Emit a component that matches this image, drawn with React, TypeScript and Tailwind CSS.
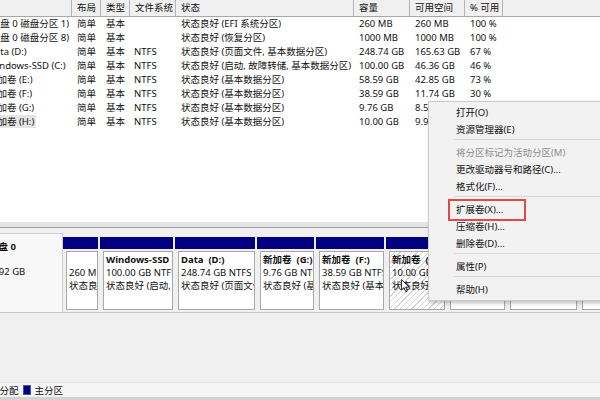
import React from 'react'

const rows = [
  { name: '(磁盘 0 磁盘分区 1)', fs: '', status: '状态良好 (EFI 系统分区)', cap: '260 MB', free: '260 MB', pct: '100 %' },
  { name: '(磁盘 0 磁盘分区 8)', fs: '', status: '状态良好 (恢复分区)', cap: '1000 MB', free: '1000 MB', pct: '100 %' },
  { name: 'Data (D:)', fs: 'NTFS', status: '状态良好 (页面文件, 基本数据分区)', cap: '248.74 GB', free: '165.63 GB', pct: '67 %' },
  { name: 'Windows-SSD (C:)', fs: 'NTFS', status: '状态良好 (启动, 故障转储, 基本数据分区)', cap: '100.00 GB', free: '46.36 GB', pct: '46 %' },
  { name: '新加卷 (E:)', fs: 'NTFS', status: '状态良好 (基本数据分区)', cap: '58.59 GB', free: '42.85 GB', pct: '73 %' },
  { name: '新加卷 (F:)', fs: 'NTFS', status: '状态良好 (基本数据分区)', cap: '38.59 GB', free: '11.74 GB', pct: '30 %' },
  { name: '新加卷 (G:)', fs: 'NTFS', status: '状态良好 (基本数据分区)', cap: '9.76 GB', free: '8.54 GB', pct: '87 %' },
  { name: '新加卷 (H:)', fs: 'NTFS', status: '状态良好 (基本数据分区)', cap: '10.00 GB', free: '9.96 GB', pct: '100 %' },
]

// boxes after H: sit under the context menu, so they carry no text
const parts = [
  { w: 'w-[35px]', title: '', size: '260 MB', status: '状态良好 (EFI 系统分区)' },
  { w: 'w-[73px]', title: 'Windows-SSD (C:)', size: '100.00 GB NTFS', status: '状态良好 (启动, 故障转储)' },
  { w: 'w-[80px]', title: 'Data  (D:)', size: '248.74 GB NTFS', status: '状态良好 (页面文件, 基本)' },
  { w: 'w-[57px]', title: '新加卷  (G:)', size: '9.76 GB NTFS', status: '状态良好 (基本数据分区)' },
  { w: 'w-[68px]', title: '新加卷  (F:)', size: '38.59 GB NTFS', status: '状态良好 (基本数据分区)' },
  { w: 'w-[59px]', title: '新加卷  (H:)', size: '10.00 GB NTFS', status: '状态良好 (基本数据分区)', hatched: true },
  { w: 'w-[58px]', title: '', size: '', status: '' },
  { w: 'w-[70px]', title: '', size: '', status: '' },
  { w: 'w-[60px]', title: '', size: '', status: '' },
]

const menu: (string | null)[] = [
  '打开(O)',
  '资源管理器(E)',
  null,
  '将分区标记为活动分区(M)',
  '更改驱动器号和路径(C)...',
  '格式化(F)...',
  null,
  '扩展卷(X)...',
  '压缩卷(H)...',
  '删除卷(D)...',
  null,
  '属性(P)',
  null,
  '帮助(H)',
]

const cols = 'grid grid-cols-[72px_29px_29px_46px_178px_56px_55px_38px_1fr]'

export default function App() {
  return (
    <div className="relative w-[600px] h-[400px] overflow-hidden flex flex-col bg-[#f0f0f0] text-[9.5px] text-[#111] font-['Noto_Sans','Noto_Sans_CJK_SC',sans-serif]">
      {/* volume list */}
      <div className="h-[222px] bg-white overflow-hidden">
        <div className={`${cols} h-[17px] leading-[16px] bg-[#f0f0f0] border-b border-[#a8a8a8]`}>
          {['', '布局', '类型', '文件系统', '状态', '容量', '可用空间', '% 可用'].map((h, i) => (
            <div key={i} className="px-[5px] border-r border-[#b4b4b4] whitespace-nowrap overflow-hidden">
              {h}
            </div>
          ))}
          <div />
        </div>
        {rows.map((r, i) => (
          <div key={i} className={`${cols} h-[14px] leading-[14px] whitespace-nowrap`}>
            <div className="overflow-hidden">
              <span className={`ml-[-14px] px-[2px] ${i === 7 ? 'bg-[#e5e5e5]' : ''}`}>{r.name}</span>
            </div>
            <div className="px-[5px]">简单</div>
            <div className="px-[5px]">基本</div>
            <div className="px-[4px]">{r.fs}</div>
            <div className="px-[5px] overflow-hidden">{r.status}</div>
            <div className="px-[5px] overflow-hidden">{r.cap}</div>
            <div className="px-[5px]">{r.free}</div>
            <div className="px-[5px]">{r.pct}</div>
            <div />
          </div>
        ))}
      </div>

      {/* splitter */}
      <div className="h-[5px] bg-[#e4e4e4]" />
      <div className="h-px bg-[#a0a0a0]" />

      {/* disk map */}
      <div className="pt-[5px]">
        <div className="flex h-[80px] border-b border-[#c8c8c8]">
          <div className="w-[63px] shrink-0 bg-[#f8f8f8] border-r border-t border-[#cfcfcf] overflow-hidden whitespace-nowrap leading-[13px]">
            <div className="mt-[6px] ml-[-11px] font-bold">磁盘 0</div>
            <div className="mt-[12px] ml-[-20px]">476.92 GB</div>
          </div>
          <div className="flex gap-[2px]">
            {parts.map((p, i) => (
              <div key={i} className={`${p.w} shrink-0 pt-[4px] pb-[2px] flex flex-col`}>
                <div className="h-[12px] bg-[#000080]" />
                <div
                  className={`mt-[2px] ml-[3px] h-[60px] border border-[#a8a8a8] pl-[2px] pt-[1px] overflow-hidden whitespace-pre leading-[13px] ${
                    p.hatched
                      ? 'bg-[repeating-linear-gradient(135deg,#ffffff_0px,#ffffff_3px,#d6d6d6_3px,#d6d6d6_4px)] border-[#888888]'
                      : 'bg-white'
                  }`}
                >
                  <div className="font-bold h-[13px]">{p.title}</div>
                  <div>{p.size}</div>
                  <div>{p.status}</div>
                </div>
              </div>
            ))}
          </div>
        </div>
      </div>

      <div className="flex-1" />

      {/* legend */}
      <div className="h-[15px] bg-[#f5f5f5] border-t border-[#e2e2e2] flex items-center whitespace-nowrap leading-[13px]">
        <span className="ml-[-10px]">未分配</span>
        <span className="ml-[4px] w-[8px] h-[10px] bg-[#000080] border border-[#5050a0]" />
        <span className="ml-[4px]">主分区</span>
      </div>
      <div className="h-[3px] bg-[#d2d2d2]" />

      {/* context menu */}
      <div className="absolute left-[428px] top-[101px] w-[200px] bg-[#f2f2f2] border border-[#cccccc] shadow-[2px_2px_4px_rgba(0,0,0,0.25)] pt-[2px] pb-[2px]">
        {menu.map((m, i) =>
          m === null ? (
            <div key={i} className="h-[6px] pt-[1px] ml-[25px]">
              <div className="h-px bg-[#d7d7d7]" />
            </div>
          ) : (
            <div
              key={i}
              className={`h-[17px] leading-[17px] pl-[27px] whitespace-nowrap ${i === 3 ? 'text-[#8d8d8d]' : ''}`}
            >
              {m}
            </div>
          ),
        )}
      </div>

      {/* highlight box */}
      <div className="absolute left-[448px] top-[199px] w-[78px] h-[22px] border-2 border-[#e24a4a]" />

      {/* mouse cursor */}
      <svg className="absolute left-[401px] top-[279px]" width="9" height="14" viewBox="0 0 9 14">
        <path d="M0.5 0.5 L0.5 11 L3 8.6 L4.8 12.8 L6.4 12.1 L4.7 8.1 L8 8.1 Z" fill="#fff" stroke="#000" strokeWidth="0.8" />
      </svg>
    </div>
  )
}
